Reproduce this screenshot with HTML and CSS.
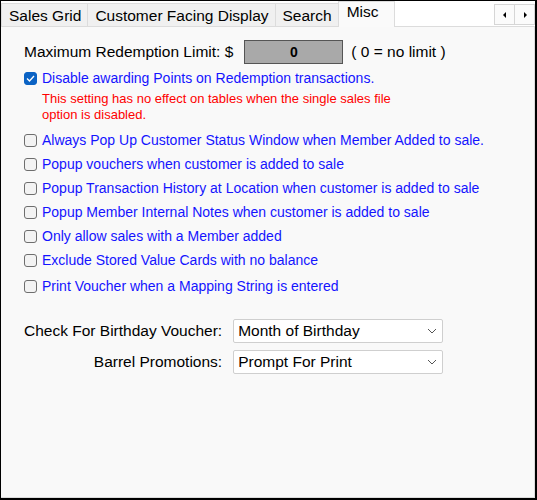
FILE: index.html
```html
<!DOCTYPE html>
<html>
<head>
<meta charset="utf-8">
<link rel="stylesheet" href="styles.css">
</head>
<body>
<div class="window">
  <div class="tabbar">
    <div class="tab">Sales Grid</div>
    <div class="tab">Customer Facing Display</div>
    <div class="tab">Search</div>
    <div class="tab active">Misc</div>
    <div class="spacer"></div>
    <div class="scroller">
      <div class="sbtn"><svg width="6" height="8" viewBox="0 0 6 8"><path d="M4 1 L1 4 L4 7 Z" fill="#000"/></svg></div>
      <div class="sbtn"><svg width="6" height="8" viewBox="0 0 6 8"><path d="M2 1 L5 4 L2 7 Z" fill="#000"/></svg></div>
    </div>
  </div>
  <div class="panel">
    <div class="limit-row">
      <span class="big">Maximum Redemption Limit: $</span>
      <div class="limit-input">0</div>
      <span class="big">( 0 = no limit )</span>
    </div>
    <div class="check-row first">
      <span class="cb checked"><svg width="9" height="7" viewBox="0 0 9 7"><path d="M1 3.5 L3.5 6 L8 1" fill="none" stroke="#fff" stroke-width="1.3"/></svg></span>
      <span class="lbl">Disable awarding Points on Redemption transactions.</span>
    </div>
    <div class="note">This setting has no effect on tables when the single sales file<br>option is disabled.</div>
    <div class="checks">
      <div class="check-row"><span class="cb"></span><span class="lbl">Always Pop Up Customer Status Window when Member Added to sale.</span></div>
      <div class="check-row"><span class="cb"></span><span class="lbl">Popup vouchers when customer is added to sale</span></div>
      <div class="check-row"><span class="cb"></span><span class="lbl">Popup Transaction History at Location when customer is added to sale</span></div>
      <div class="check-row"><span class="cb"></span><span class="lbl">Popup Member Internal Notes when customer is added to sale</span></div>
      <div class="check-row"><span class="cb"></span><span class="lbl">Only allow sales with a Member added</span></div>
      <div class="check-row"><span class="cb"></span><span class="lbl">Exclude Stored Value Cards with no balance</span></div>
      <div class="check-row last"><span class="cb"></span><span class="lbl">Print Voucher when a Mapping String is entered</span></div>
    </div>
    <div class="form-grid">
      <span class="big flabel">Check For Birthday Voucher:</span>
      <div class="select"><span>Month of Birthday</span><svg width="10" height="6" viewBox="0 0 10 6"><path d="M1 1 L5 5 L9 1" fill="none" stroke="#555" stroke-width="1"/></svg></div>
      <span class="big flabel">Barrel Promotions:</span>
      <div class="select"><span>Prompt For Print</span><svg width="10" height="6" viewBox="0 0 10 6"><path d="M1 1 L5 5 L9 1" fill="none" stroke="#555" stroke-width="1"/></svg></div>
    </div>
  </div>
</div>
</body>
</html>
```

FILE: styles.css
```css
* { box-sizing: border-box; }
html, body { margin: 0; padding: 0; }
body {
  font-family: "Liberation Sans", Arial, sans-serif;
  background: #fff;
}
.window {
  width: 537px;
  height: 500px;
  border: 1px solid #000;
  border-right-width: 2px;
  border-bottom-width: 2px;
  background: #fff;
  display: flex;
  flex-direction: column;
}
.tabbar {
  display: flex;
  align-items: flex-end;
  height: 25px;
  position: relative;
  z-index: 1;
}
.tab {
  height: 23px;
  padding: 0 6px 0 7px;
  font-size: 15.5px;
  line-height: 23px;
  color: #000;
  background: #f0f0f0;
  border: 1px solid #dcdcdc;
  border-bottom: none;
  margin-right: -1px;
  white-space: nowrap;
}
.tab.active {
  height: 26px;
  line-height: 20px;
  background: #fafafa;
  padding: 0 15px 0 8px;
  margin-bottom: -1px;
  margin-right: 0;
}
.spacer { flex: 1; }
.scroller {
  align-self: flex-start;
  margin-top: 3px;
  display: flex;
}
.sbtn {
  width: 21px;
  height: 21px;
  background: #fbfbfb;
  border: 1px solid #d6d6d6;
  display: flex;
  align-items: center;
  justify-content: center;
  margin-left: -1px;
}
.panel {
  flex: 1;
  background: #f9f9f9;
  border: 1px solid #dcdcdc;
  border-left: none;
  padding: 13px 0 0 23px;
}
.big {
  font-size: 15.5px;
  color: #000;
  white-space: nowrap;
}
.limit-row {
  display: flex;
  align-items: center;
  height: 24px;
}
.limit-input {
  width: 99px;
  height: 24px;
  margin: 0 8px 0 11px;
  background: #a9a9a9;
  border: 1px solid #555;
  font-size: 14px;
  font-weight: bold;
  text-align: center;
  line-height: 22px;
}
.check-row {
  display: flex;
  align-items: center;
  height: 24px;
}
.check-row.first { margin-top: 2px; }
.check-row.last { margin-top: 2px; }
.cb {
  width: 13px;
  height: 13px;
  border: 1px solid #6e6e6e;
  border-radius: 3px;
  background: #f3f3f3;
  margin: 0 5px 0 0;
  display: flex;
  align-items: center;
  justify-content: center;
  flex: none;
}
.cb.checked {
  background: #0b63c4;
  border-color: #0b63c4;
}
.lbl {
  font-size: 14px;
  color: #1414ff;
  white-space: nowrap;
}
.note {
  color: #ff0000;
  font-size: 13px;
  line-height: 16px;
  padding-left: 18px;
  margin-top: 1px;
  margin-bottom: 5px;
}
.form-grid {
  display: grid;
  grid-template-columns: max-content 210px;
  column-gap: 11px;
  row-gap: 7px;
  align-items: center;
  margin-top: 21px;
}
.flabel { justify-self: end; }
.select {
  height: 24px;
  background: #fff;
  border: 1px solid #cfcfcf;
  border-radius: 2px;
  display: flex;
  align-items: center;
  justify-content: space-between;
  padding: 0 5px 0 4px;
  font-size: 15.5px;
  color: #000;
}
```
